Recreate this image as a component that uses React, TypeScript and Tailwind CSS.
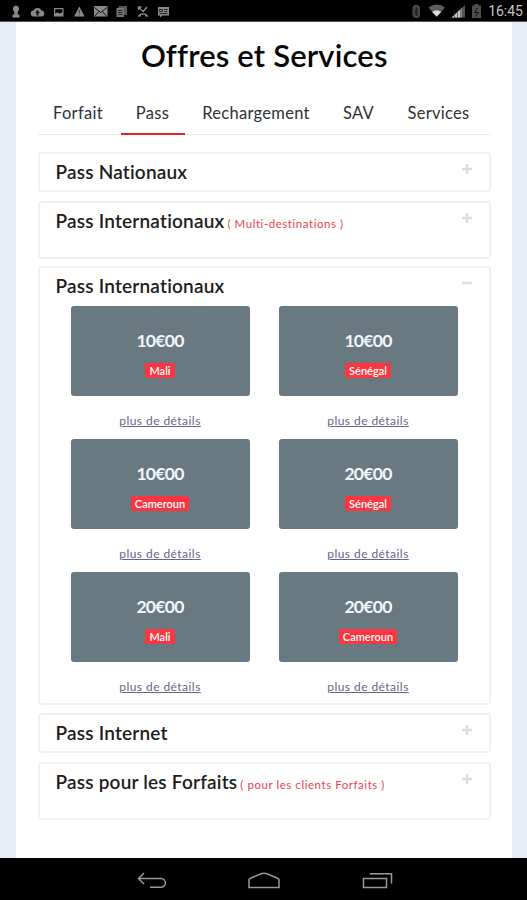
const tabs = [
  { label: 'Forfait', className: 'w-[81px]' },
  { label: 'Pass', className: 'w-16', active: true },
  { label: 'Rechargement', className: 'w-[139px]' },
  { label: 'SAV', className: 'w-[62px]' },
  { label: 'Services', className: 'w-[94px]' },
]

const offers = [
  { price: '10€00', country: 'Mali' },
  { price: '10€00', country: 'Sénégal' },
  { price: '10€00', country: 'Cameroun' },
  { price: '20€00', country: 'Sénégal' },
  { price: '20€00', country: 'Mali' },
  { price: '20€00', country: 'Cameroun' },
]

function StatusBar() {
  return (
    <header className="flex h-[22px] shrink-0 items-center justify-between border-b border-[#555] bg-black pr-1">
      <svg width="180" height="22" viewBox="0 0 180 22" fill="#8a8a8a">
        {/* keyhole */}
        <path d="M16 5.500a3.300 3.300 0 0 0-1.700 6V14.500H12.500v3h7v-3h-1.800v-3A3.300 3.300 0 0 0 16 5.500z" />
        {/* cloud upload */}
        <path d="M34 16.500h7a3 3 0 0 0 .5-6A4.500 4.500 0 0 0 33.500 10.500a3 3 0 0 0 .5 6z" />
        <path d="M37.500 10l-2.500 3h1.500v2.500h2V13H40z" fill="#111" />
        {/* picture */}
        <path d="M54 8h9.500v8.500H54zM55.200 9.200v4.600l2-1.600 2 1.300 3.100-1V9.200z" fillRule="evenodd" />
        {/* warning */}
        <path d="M79.300 6.500l5.200 10H74.100z" />
        <path d="M78.800 10h1v3.500h-1zM78.800 14.500h1v1h-1z" fill="#333" />
        {/* mail */}
        <path d="M94 6h13.500v10.500H94z" />
        <path d="M94.500 7.500l6.200 5 6.300-5M95 16l4-4.500M106.500 16l-4-4.500" fill="none" stroke="#111" />
        {/* documents */}
        <path d="M118.500 6h8.500v9h-8.500z" fill="#555" />
        <path d="M116.500 8h7.500v9h-7.500z" fill="#777" />
        <path d="M118 10.500h4.500M118 12.500h4.500M118 14.500h4.500" stroke="#222" />
        {/* missed call */}
        <path d="M138.500 7l4.500 4.500 4-4.500M138.500 10V7h3" fill="none" stroke="#8a8a8a" strokeWidth="1.300" />
        <path d="M137.500 16.500c1.500-4.500 9.500-4.500 11 0l-3 .3-.6-2h-3.800l-.6 2z" />
        {/* message */}
        <path d="M158 7h11v8.500h-6.500l-2.500 2v-2h-2z" />
        <path d="M159.500 9.500h3v2h-3zM164 9.500h3.500M164 11.500h3.500M159.500 13.500h8" fill="none" stroke="#222" />
      </svg>
      <div className="flex items-center">
        <svg width="77" height="22" viewBox="412 0 77 22">
          <rect x="413.500" y="5" width="7.500" height="13" rx="3.500" fill="#4a4a4a" />
          <path d="M415.200 9.500l4 4.500-2 2V7.500l2 2-4 4.500" fill="none" stroke="#111" strokeWidth=".8" />
          <path d="M429.500 7.500a13 13 0 0 1 16.500 0L437.700 17z" fill="#5c5c5c" />
          <path d="M433.200 12a7 7 0 0 1 9 0l-4.500 4.500z" fill="#ddd" />
          <path d="M452.500 17.500L466 5v12.500z" fill="#555" />
          <path d="M452.500 17.500L462.500 8.300v9.200z" fill="#c8c8c8" />
          <path d="M455.500 10v8M458.500 8v10M461.500 7v11" stroke="#333" strokeWidth=".6" />
          <path d="M473 5.500h2.500V4h4v1.500h2.500V18h-9z" fill="#4e4e4e" />
          <path d="M478.500 8l-3 4.500h4l-3 4" fill="none" stroke="#111" />
        </svg>
        <span className="font-['Roboto',sans-serif] text-[14px] leading-[22px] text-[#c4c4c4]">16:45</span>
      </div>
    </header>
  )
}

function Panel({ title, note, className, open, children }: {
  title: string
  note?: string
  className: string
  open?: boolean
  children?: React.ReactNode
}) {
  return (
    <section className={`rounded-[3px] border-2 border-[#f0f1f3] ${className}`}>
      <div className="flex items-start justify-between pr-[17px] pl-4">
        <h2 className="pt-[7px] text-[19px] leading-[22px] font-semibold tracking-[0.2px] whitespace-nowrap text-[#1c1c21]">
          {title}
          {note && <span className="ml-[3px] text-[11.5px] font-normal tracking-[0.55px] text-[#ee3f4b]">{note}</span>}
        </h2>
        <svg className="mt-[10px]" width="10" height="10" viewBox="0 0 10 10" stroke="#dcdde4" strokeWidth="2.500">
          <path d={open ? 'M0 5h10' : 'M0 5h10M5 0v10'} />
        </svg>
      </div>
      {children}
    </section>
  )
}

function Offer({ price, country }: { price: string; country: string }) {
  return (
    <div className="flex h-[133px] flex-col items-center">
      <div className="flex h-[90px] w-full flex-col items-center rounded-[3px] bg-[#697982] pt-[25px]">
        <span className="text-[17.5px] leading-5 font-bold tracking-[-0.7px] text-[#f2f7fa]">{price}</span>
        <span className="mt-3 rounded-[2px] bg-[#fb3640] px-1 text-[11px] leading-[15px] font-semibold text-white">
          {country}
        </span>
      </div>
      <a className="mt-[17px] text-[12px] leading-4 tracking-[0.45px] text-[#6a6488] underline">plus de détails</a>
    </div>
  )
}

function NavBar() {
  return (
    <footer className="flex h-[42px] shrink-0 items-center justify-center bg-black">
      <svg width="260" height="42" viewBox="134 858 260 42" fill="none" stroke="#999" strokeWidth="1.500">
        <path d="M144 873l-5.500 5.500 5.500 5.500M139 878.500h22a4.300 4.300 0 0 1 0 8.800h-11" />
        <path d="M249 887.500v-7.500q0-1 1-1.500l11-4.700q3-1 6 0l11 4.700q1 .5 1 1.500v7.500z" />
        <path d="M363.500 878.500h23v9h-23zM370 873.800h21.500v9.700" />
      </svg>
    </footer>
  )
}

export default function App() {
  return (
    <div className="flex h-[900px] w-[527px] flex-col overflow-hidden bg-[#e9edf5] font-['Lato',sans-serif]">
      <StatusBar />
      <main className="mr-[15px] ml-4 flex-1 bg-white pr-[21px] pl-[21.5px]">
        <h1 className="pt-[13px] text-center text-[31px] leading-10 font-semibold tracking-[0.15px] text-[#070708]">
          Offres et Services
        </h1>
        <nav className="mt-[17px] flex h-[43px] gap-[2px] border-b border-[#ebebeb] text-[16.5px] text-[#303036]">
          {tabs.map((tab) => (
            <div
              key={tab.label}
              className={`flex h-[43px] justify-center pt-[9px] tracking-[0.3px] ${tab.className} ${tab.active ? 'border-b-2 border-[#dc2428]' : ''}`}
            >
              {tab.label}
            </div>
          ))}
        </nav>
        <div className="mt-[17px] flex flex-col">
          <Panel title="Pass Nationaux" className="h-10" />
          <Panel title="Pass Internationaux" note="( Multi-destinations )" className="mt-[9px] h-[58px]" />
          <Panel title="Pass Internationaux" className="mt-[7px] h-[439px]" open>
            <div className="mt-[9px] grid grid-cols-[179px_179px] gap-x-[29px] pl-[31px]">
              {offers.map((offer) => (
                <Offer key={offer.price + offer.country} {...offer} />
              ))}
            </div>
          </Panel>
          <Panel title="Pass Internet" className="mt-2 h-10" />
          <Panel title="Pass pour les Forfaits" note="( pour les clients Forfaits )" className="mt-[9px] h-[58px]" />
        </div>
      </main>
      <NavBar />
    </div>
  )
}
